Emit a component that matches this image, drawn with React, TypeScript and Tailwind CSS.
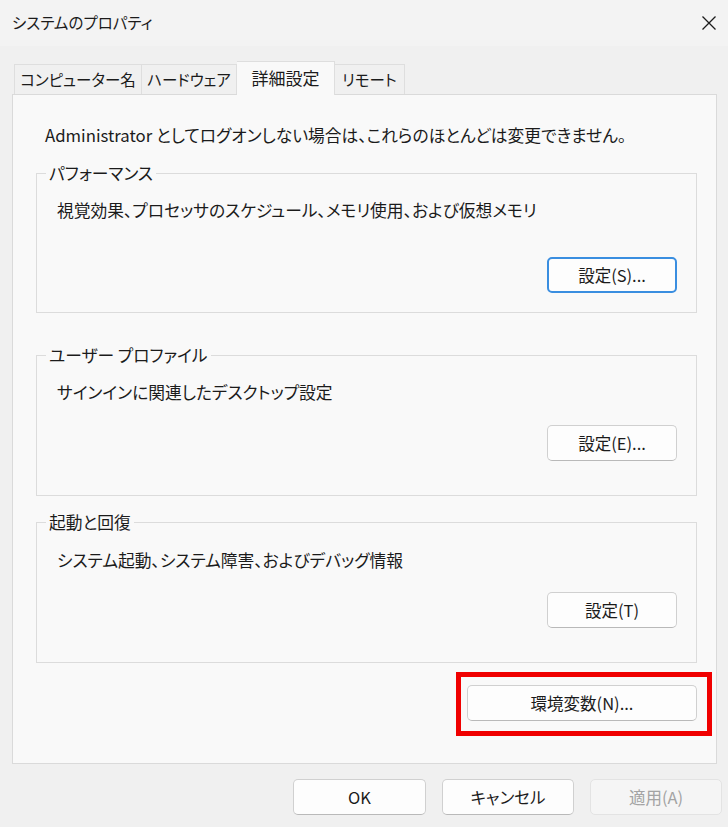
import React from 'react';

const font = "font-['Noto_Sans_CJK_JP','Noto_Sans',sans-serif] [font-feature-settings:'palt']";

function WinButton({
  label,
  focused,
  disabled,
  className = '',
}: {
  label: string;
  focused?: boolean;
  disabled?: boolean;
  className?: string;
}) {
  let look = 'border border-[#d0d0d0] border-b-[#b9b9b9] bg-[#fdfdfd] text-[#1b1b1b]';
  if (focused) look = 'border-2 border-[#3a8ee0] bg-[#fdfdfd] text-[#1b1b1b]';
  if (disabled) look = 'border border-[#e3e3e3] bg-[#f5f5f5] text-[#a3a3a3]';
  return (
    <button
      type="button"
      className={`flex h-[36px] items-center justify-center rounded-[5px] text-[16.5px] leading-none ${look} ${className}`}
    >
      {label}
    </button>
  );
}

function Group({
  title,
  desc,
  button,
  focused,
  className,
  descPad,
  buttonGap,
  bottomPad,
}: {
  title: string;
  desc: string;
  button: string;
  focused?: boolean;
  className: string;
  descPad: string;
  buttonGap: string;
  bottomPad: string;
}) {
  return (
    <fieldset className={`ml-[23px] mr-[19px] border border-[#dcdcdc] px-[20px] ${bottomPad} ${className}`}>
      <legend className="ml-[-11px] px-[3px] text-[16.75px] leading-[20px] text-[#1b1b1b]">{title}</legend>
      <p className={`text-[16.75px] leading-[20px] text-[#1b1b1b] ${descPad}`}>{desc}</p>
      <div className={`flex justify-end ${buttonGap}`}>
        <WinButton label={button} focused={focused} className="mr-[-1px] w-[130px]" />
      </div>
    </fieldset>
  );
}

export default function App() {
  return (
    <div className={`h-[827px] w-[728px] overflow-hidden bg-[#f0f0f0] ${font}`}>
      {/* title bar */}
      <div className="flex h-[46px] items-center justify-between bg-[#f3f3f3] pl-[12px] pr-[10px]">
        <span className="text-[15.5px] text-[#1b1b1b]">システムのプロパティ</span>
        <svg width="16" height="16" viewBox="0 0 16 16" className="mr-[1px]">
          <path d="M1.5 1.5 L14.5 14.5 M14.5 1.5 L1.5 14.5" stroke="#1b1b1b" strokeWidth="1.3" />
        </svg>
      </div>

      {/* tabs */}
      <div className="ml-[14px] mt-[15px] flex items-end text-[15.5px] leading-none text-[#1b1b1b]">
        <div className="flex h-[30px] w-[128px] items-center justify-center border border-b-0 border-[#dedede] bg-[#f0f0f0]">
          コンピューター名
        </div>
        <div className="flex h-[30px] w-[95px] items-center justify-center border border-b-0 border-l-0 border-[#dedede] bg-[#f0f0f0]">
          ハードウェア
        </div>
        <div className="relative z-10 mb-[-1px] flex h-[34px] w-[98px] items-center justify-center border border-b-0 border-l-0 border-[#dedede] bg-[#f9f9f9] pb-[2px] text-[17px]">
          詳細設定
        </div>
        <div className="flex h-[30px] w-[70px] items-center justify-center border border-b-0 border-l-0 border-[#dedede] bg-[#f0f0f0]">
          リモート
        </div>
      </div>

      {/* tab page */}
      <div className="ml-[12px] h-[670px] w-[705px] border border-[#dadada] bg-[#f9f9f9]">
        <p className="ml-[32px] mt-[30px] text-[16.75px] leading-[20px] text-[#1b1b1b]">
          Administrator としてログオンしない場合は、これらのほとんどは変更できません。
        </p>

        <Group
          title="パフォーマンス"
          desc="視覚効果、プロセッサのスケジュール、メモリ使用、および仮想メモリ"
          button="設定(S)..."
          focused
          className="mt-[18px]"
          descPad="pt-[17px]"
          buttonGap="mt-[37px]"
          bottomPad="pb-[19px]"
        />
        <Group
          title="ユーザー プロファイル"
          desc="サインインに関連したデスクトップ設定"
          button="設定(E)..."
          className="mt-[32px]"
          descPad="pt-[17px]"
          buttonGap="mt-[23px]"
          bottomPad="pb-[34px]"
        />
        <Group
          title="起動と回復"
          desc="システム起動、システム障害、およびデバッグ情報"
          button="設定(T)"
          className="mt-[16px]"
          descPad="pt-[18px]"
          buttonGap="mt-[22px]"
          bottomPad="pb-[34px]"
        />

        <div className="mr-[19px] mt-[22px] flex justify-end">
          <div className="relative">
            <WinButton label="環境変数(N)..." className="w-[230px]" />
            <div className="pointer-events-none absolute left-[-11px] top-[-13px] h-[64px] w-[256px] border-[5px] border-[#f00000]" />
          </div>
        </div>
      </div>

      {/* footer buttons */}
      <div className="mt-[15px] flex justify-end gap-[16px] pr-[6px]">
        <WinButton label="OK" className="w-[133px]" />
        <WinButton label="キャンセル" className="w-[132px]" />
        <WinButton label="適用(A)" disabled className="w-[132px]" />
      </div>
    </div>
  );
}
